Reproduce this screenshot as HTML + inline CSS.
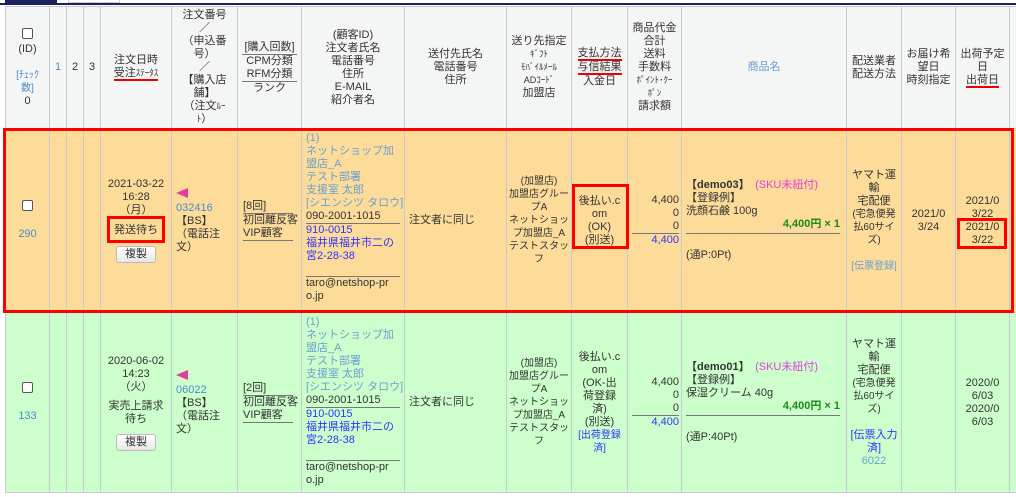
<!DOCTYPE html>
<html><head><meta charset="utf-8"><style>
*{margin:0;padding:0;box-sizing:border-box}
body{width:1016px;height:497px;overflow:hidden;background:#fff;font-family:"Liberation Sans","Noto Sans CJK JP",sans-serif;font-size:11px;line-height:13px;color:#333;position:relative}
.top{position:absolute;left:0;top:0;width:1016px;height:6px}
table{position:absolute;left:5px;top:6px;border-collapse:collapse;table-layout:fixed;width:1030px}
td{border:1px solid #c9c9d6;text-align:center;vertical-align:middle;padding:0;white-space:nowrap;overflow:hidden}
tr.h td{background:#f4f5f5;height:122px}
tr.r1 td{background:#fddc9a;height:184px}
tr.r2 td{background:#ccffcc;height:180px}
.l{text-align:left}
.rt{text-align:right}
.blue{color:#4a8cc8}
.pur{color:#3333ff}
.lb{color:#6a9fd3}
.ul{border-bottom:2px solid #e00;display:inline-block;line-height:12px}
.cb{display:inline-block;width:11px;height:11px;border:1px solid #555;border-radius:2px;background:#fff}
.btn{display:inline-block;border:1px solid #bbb;border-radius:3px;background:linear-gradient(#fff,#e8e8e8);padding:1px 8px;margin-top:4px}
.hr{border-top:1px solid #777;margin:2px 0}
.flag{display:inline-block;width:0;height:0;border-top:5px solid transparent;border-bottom:5px solid transparent;border-right:12px solid #e0409a}
.grn{color:#1a8a1a;font-weight:bold}
.pink{color:#e040e0}
.box{position:absolute;border:3px solid #f00}
.s{font-size:9px}
</style></head><body>
<div class="top"><div style="position:absolute;left:5px;top:0;width:52px;height:3px;background:#1a2060"></div><div style="position:absolute;left:68px;top:0;width:52px;height:3px;border:1px solid #ccc;border-top:0"></div><div style="position:absolute;left:0;top:3px;width:1016px;height:2px;background:#1a2060"></div></div>
<table>
<colgroup><col style="width:44px"><col style="width:17px"><col style="width:17px"><col style="width:17px"><col style="width:71px"><col style="width:66px"><col style="width:64px"><col style="width:103px"><col style="width:102px"><col style="width:65px"><col style="width:56px"><col style="width:54px"><col style="width:165px"><col style="width:55px"><col style="width:54px"><col style="width:54px"><col style="width:46px"></colgroup>
<tr class="h">
<td><span class="cb"></span><br>(ID)<br><br><span class="blue" style="font-size:10px">[ﾁｪｯｸ<br>数]</span><br>0</td>
<td class="blue">1</td><td>2</td><td>3</td>
<td>注文日時<br><span class="ul">受注<span class="s">ｽﾃｰﾀｽ</span></span></td>
<td>注文番号<br>／<br>（申込番<br>号）<br>／<br>【購入店<br>舗】<br>（注文<span class="s">ﾙｰ</span><br><span class="s">ﾄ</span>）</td>
<td>[購入回数]<div class="hr" style="margin:0 4px"></div>CPM分類<br>RFM分類<div class="hr" style="margin:0 4px"></div>ランク</td>
<td>(顧客ID)<br>注文者氏名<br>電話番号<br>住所<br>E-MAIL<br>紹介者名</td>
<td>送付先氏名<br>電話番号<br>住所</td>
<td>送り先指定<br><span class="s">ｷﾞﾌﾄ<br>ﾓﾊﾞｲﾙﾒｰﾙ<br>ADｺｰﾄﾞ</span><br>加盟店</td>
<td><span class="ul">支払方法</span><br><span class="ul">与信結果</span><br>入金日</td>
<td>商品代金<br>合計<br>送料<br>手数料<br><span class="s">ﾎﾟｲﾝﾄ･ｸｰ<br>ﾎﾟﾝ</span><br>請求額</td>
<td class="lb">商品名</td>
<td>配送業者<br>配送方法</td>
<td>お届け希<br>望日<br>時刻指定</td>
<td>出荷予定<br>日<br><span class="ul">出荷日</span></td>
<td></td>
</tr>
<tr class="r1">
<td><span class="cb"></span><br><br><span class="blue">290</span></td>
<td></td><td></td><td></td>
<td>2021-03-22<br>16:28<br>（月）<br><div style="margin:7px 0 5px">発送待ち</div><span class="btn">複製</span></td>
<td class="l" style="padding-left:4px"><span class="flag"></span><br><span class="blue">032416</span><br>【BS】<br>（電話注<br>文）</td>
<td class="l" style="padding:0 8px 0 5px">[8回]<div class="hr" style="margin:0"></div>初回離反客<br>VIP顧客<div class="hr" style="margin:0"></div></td>
<td class="l" style="vertical-align:top;padding:3px 4px 0 4px"><span class="lb">(1)<br>ネットショップ加<br>盟店_A<br>テスト部署<br>支援室 太郎<br>[シエンシツ タロウ]</span><br>090-2001-1015<div class="hr" style="margin:0"></div><span class="pur">910-0015<br>福井県福井市二の<br>宮2-28-38</span><br><br><div class="hr" style="margin:0"></div>taro@netshop-pr<br>o.jp</td>
<td class="l" style="padding-left:4px">注文者に同じ</td>
<td style="font-size:10px">(加盟店)<br>加盟店グルー<br>プA<br>ネットショッ<br>プ加盟店_A<br>テストスタッ<br>フ</td>
<td>後払い.c<br>om<br>(OK)<br>(別送)</td>
<td class="rt" style="padding-right:2px">4,400<br>0<br>0<div class="hr" style="margin:0 0 0 4px"></div><span class="pur">4,400</span></td>
<td class="l" style="padding:0 6px 0 4px"><b>【demo03】</b>　<span class="pink">(SKU未紐付)</span><br>【登録例】<br>洗顔石鹸 100g<div class="rt grn">4,400円 × 1</div><div class="hr"></div><br>(通P:0Pt)</td>
<td>ヤマト運<br>輸<br>宅配便<br><span style="font-size:10px">(宅急便発<br>払60サイ<br>ズ)</span><br><br><span class="lb" style="font-size:10px">[伝票登録]</span></td>
<td>2021/0<br>3/24</td>
<td>2021/0<br>3/22<br>2021/0<br>3/22</td>
<td></td>
</tr>
<tr class="r2">
<td><span class="cb"></span><br><br><span class="blue">133</span></td>
<td></td><td></td><td></td>
<td>2020-06-02<br>14:23<br>（火）<br><div style="margin:6px 0 4px">実売上請求<br>待ち</div><span class="btn">複製</span></td>
<td class="l" style="padding-left:4px"><span class="flag"></span><br><span class="blue">06022</span><br>【BS】<br>（電話注<br>文）</td>
<td class="l" style="padding:0 8px 0 5px">[2回]<div class="hr" style="margin:0"></div>初回離反客<br>VIP顧客<div class="hr" style="margin:0"></div></td>
<td class="l" style="vertical-align:top;padding:3px 4px 0 4px"><span class="lb">(1)<br>ネットショップ加<br>盟店_A<br>テスト部署<br>支援室 太郎<br>[シエンシツ タロウ]</span><br>090-2001-1015<div class="hr" style="margin:0"></div><span class="pur">910-0015<br>福井県福井市二の<br>宮2-28-38</span><br><br><div class="hr" style="margin:0"></div>taro@netshop-pr<br>o.jp</td>
<td class="l" style="padding-left:4px">注文者に同じ</td>
<td style="font-size:10px">(加盟店)<br>加盟店グルー<br>プA<br>ネットショッ<br>プ加盟店_A<br>テストスタッ<br>フ</td>
<td>後払い.c<br>om<br>(OK-出<br>荷登録<br>済)<br>(別送)<br><span class="pur" style="font-size:10px">[出荷登録<br>済]</span></td>
<td class="rt" style="padding-right:2px">4,400<br>0<br>0<div class="hr" style="margin:0 0 0 4px"></div><span class="pur">4,400</span></td>
<td class="l" style="padding:0 6px 0 4px"><b>【demo01】</b>　<span class="pink">(SKU未紐付)</span><br>【登録例】<br>保湿クリーム 40g<div class="rt grn">4,400円 × 1</div><div class="hr"></div><br>(通P:40Pt)</td>
<td>ヤマト運<br>輸<br>宅配便<br><span style="font-size:10px">(宅急便発<br>払60サイ<br>ズ)</span><br><br><span class="pur">[伝票入力<br>済]</span><br><span class="lb">6022</span></td>
<td></td>
<td>2020/0<br>6/03<br>2020/0<br>6/03</td>
<td></td>
</tr>
</table>
<div class="box" style="left:3px;top:128px;width:1011px;height:185px"></div>
<div class="box" style="left:107px;top:216px;width:58px;height:27px"></div>
<div class="box" style="left:572px;top:184px;width:57px;height:65px"></div>
<div class="box" style="left:957px;top:218px;width:50px;height:31px"></div>
</body></html>
